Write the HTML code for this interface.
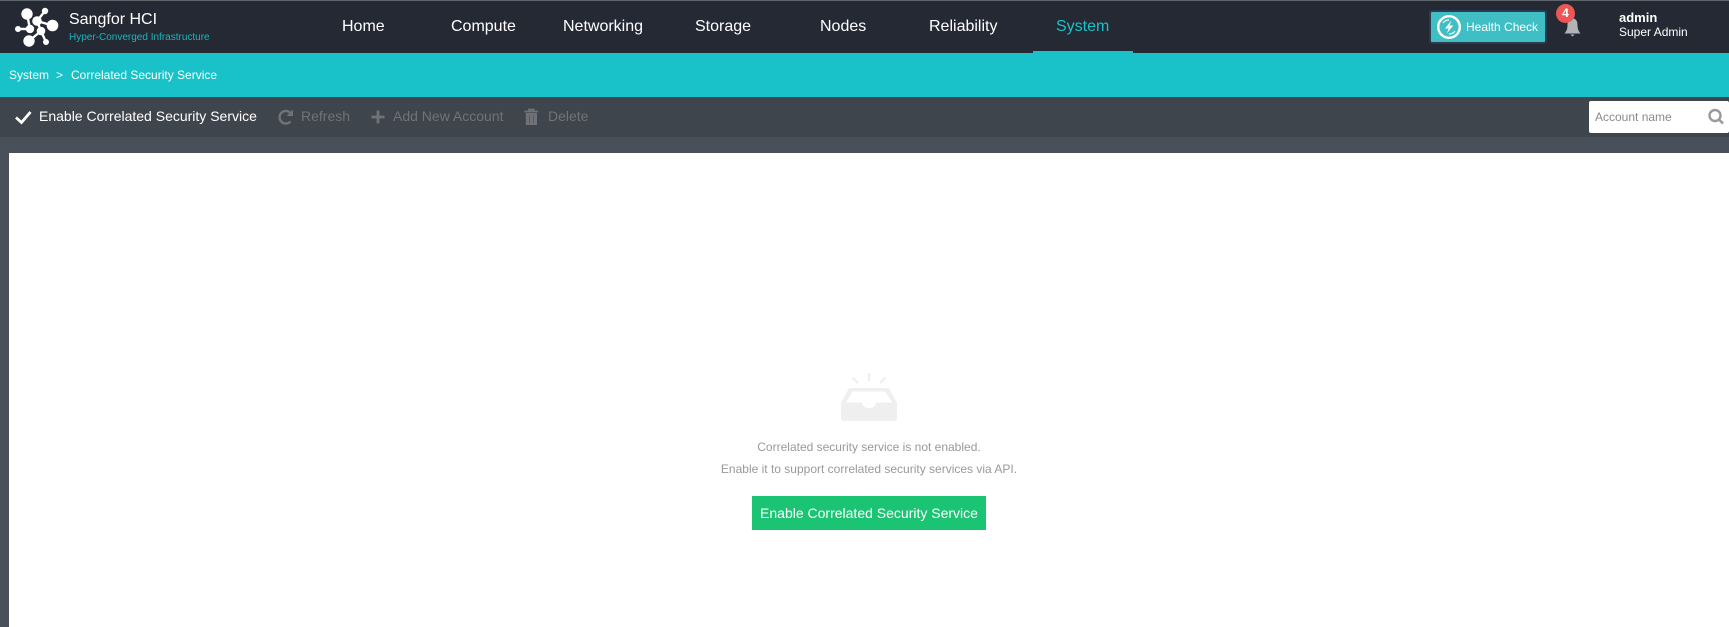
<!DOCTYPE html>
<html lang="en">
<head>
<meta charset="utf-8">
<title>Sangfor HCI</title>
<style>
html,body{margin:0;padding:0;width:1729px;height:627px;overflow:hidden;background:#fff;font-family:"Liberation Sans",Arial,sans-serif;}
.a{position:absolute;white-space:nowrap;}
.bar{position:absolute;left:0;width:1729px;}
.nav{position:absolute;top:16px;line-height:22px;font-size:16px;color:#fff;white-space:nowrap;}
.tool{position:absolute;top:106px;line-height:20px;font-size:14px;color:#6f7377;white-space:nowrap;}
svg{position:absolute;left:0;top:0;overflow:visible;}
</style>
</head>
<body>
<div class="bar" style="top:0;height:1px;background:#5e666c"></div>
<div class="bar" style="top:1px;height:52px;background:#252934"></div>
<div class="bar" style="top:53px;height:44px;background:#18c2c8"></div>
<div class="bar" style="top:97px;height:40px;background:#3f454d"></div>
<div class="bar" style="top:137px;height:16px;background:#4a505a"></div>
<div class="a" style="left:0;top:153px;width:9px;height:474px;background:#4a505a"></div>
<div class="a" style="left:1033px;top:51px;width:100px;height:2px;background:#18c2c8"></div>

<div class="a" style="left:69px;top:10px;font-size:16px;line-height:20px;color:#fff">Sangfor HCI</div>
<div class="a" style="left:69px;top:31px;font-size:10px;line-height:14px;color:#18b5bb">Hyper-Converged Infrastructure</div>

<div class="nav" style="left:342px">Home</div>
<div class="nav" style="left:451px">Compute</div>
<div class="nav" style="left:563px">Networking</div>
<div class="nav" style="left:695px">Storage</div>
<div class="nav" style="left:820px">Nodes</div>
<div class="nav" style="left:929px">Reliability</div>
<div class="nav" style="left:1056px;color:#18c2c8">System</div>

<div class="a" style="left:1429px;top:10px;width:114px;height:30px;border:2px solid #2a3d50;border-radius:3px;background:#3fbfc4"></div>
<div class="a" style="left:1466px;top:17px;font-size:12px;line-height:20px;color:#fff">Health Check</div>
<div class="a" style="left:1619px;top:10px;font-size:13px;font-weight:bold;line-height:16px;color:#fff">admin</div>
<div class="a" style="left:1619px;top:24px;font-size:12px;line-height:16px;color:#fff">Super Admin</div>

<div class="a" style="left:9px;top:66px;font-size:12px;line-height:18px;color:#fff">System</div>
<div class="a" style="left:56px;top:66px;font-size:12px;line-height:18px;color:#fff">&gt;</div>
<div class="a" style="left:71px;top:66px;font-size:12px;line-height:18px;color:#fff">Correlated Security Service</div>

<div class="tool" style="left:39px;color:#fff">Enable Correlated Security Service</div>
<div class="tool" style="left:301px">Refresh</div>
<div class="tool" style="left:393px">Add New Account</div>
<div class="tool" style="left:548px">Delete</div>

<div class="a" style="left:1589px;top:101px;width:140px;height:32px;background:#fff;border-radius:2px"></div>
<div class="a" style="left:1595px;top:107px;font-size:12px;line-height:20px;color:#8a8a8a">Account name</div>

<div class="a" style="left:9px;top:153px;width:1720px;height:474px;background:#fff"></div>
<div class="a" style="left:669px;top:438px;width:400px;text-align:center;font-size:12px;line-height:18px;color:#999">Correlated security service is not enabled.</div>
<div class="a" style="left:669px;top:460px;width:400px;text-align:center;font-size:12px;line-height:18px;color:#999">Enable it to support correlated security services via API.</div>
<div class="a" style="left:752px;top:496px;width:234px;height:34px;background:#1bc473;color:#fff;text-align:center;font-size:14px;line-height:34px">Enable Correlated Security Service</div>
<div class="a" style="left:1556px;top:4px;width:19px;height:19px;border-radius:50%;background:#ee5555;color:#fff;text-align:center;font-size:12px;font-weight:bold;line-height:18px;z-index:3">4</div>

<svg width="1729" height="627" viewBox="0 0 1729 627">
  <!-- logo -->
  <g stroke="#fff" stroke-width="2.400" fill="none">
    <path d="M27 14L30 29M45 11L37 21L52.500 25.500M18 29H30M41 31L29 41M41 31L46 42M37 21L41 31"/>
  </g>
  <g fill="#fff">
    <circle cx="27" cy="14" r="5.700"/><circle cx="45" cy="11" r="3.200"/><circle cx="37" cy="21" r="4.800"/>
    <circle cx="52.500" cy="25.500" r="5.800"/><circle cx="18" cy="29" r="3"/><circle cx="30" cy="29" r="4.200"/>
    <circle cx="41" cy="31" r="4.300"/><circle cx="29" cy="41" r="5.700"/><circle cx="46" cy="42" r="3"/>
  </g>
  <!-- health -->
  <circle cx="1449" cy="27" r="10.800" fill="none" stroke="#fff" stroke-width="2.400"/>
  <path d="M1443 23A7 7 0 0 1 1449 20M1455 31A7 7 0 0 1 1449 34" fill="none" stroke="#fff" stroke-width="1.200"/>
  <path d="M1451.500 20.500L1445 28.500H1448.700L1446.800 33.500L1453.300 25.500H1449.600Z" fill="#fff"/>
  <!-- bell -->
  <path d="M1572.500 18.500C1568.500 18.500 1567.500 22 1567.500 25C1567.500 29 1566.500 31 1564.500 33.500H1580.500C1578.500 31 1577.500 29 1577.500 25C1577.500 22 1576.500 18.500 1572.500 18.500Z" fill="#b0b4b8"/>
  <path d="M1570.300 34.500H1574.700L1572.500 36.500Z" fill="#b0b4b8"/>
  <!-- check -->
  <path d="M16 117.500L21.500 122.500L30.500 112" fill="none" stroke="#fff" stroke-width="2.800"/>
  <!-- refresh -->
  <path d="M290.500 121.500A6.300 6.300 0 1 1 290 112.500" fill="none" stroke="#6f7377" stroke-width="2.400"/>
  <path d="M293 109.500V116H286.500Z" fill="#6f7377"/>
  <!-- plus -->
  <path d="M378 110.500V123.500M371.500 117H384.500" stroke="#6f7377" stroke-width="2.800" fill="none"/>
  <!-- trash -->
  <path d="M524.500 111.500H538M529 111V109.500H533.500V111" stroke="#6f7377" stroke-width="1.800" fill="none"/>
  <path d="M525.800 113H537V125H525.800Z" fill="#6f7377"/>
  <path d="M529.500 115V123M533.500 115V123" stroke="#565a60" stroke-width="1"/>
  <!-- search -->
  <circle cx="1715" cy="115.500" r="5.500" fill="none" stroke="#9a9a9a" stroke-width="2.400"/>
  <path d="M1719 119.500L1723 123.500" stroke="#9a9a9a" stroke-width="2.600"/>
  <!-- empty tray -->
  <path d="M869 373V381M852.500 377.500L858 383M885.500 377.500L880 383" stroke="#efefef" stroke-width="2.200" fill="none"/>
  <path d="M851 388H887Q889 388 890 390L897 403V418Q897 421 894 421H844Q841 421 841 418V403L848 390Q849 388 851 388Z" fill="#efefef"/>
  <path d="M852.500 391.500H885.500L892 402.500H876C875.500 410 862.500 410 862 402.500H846Z" fill="#fff"/>
</svg>
</body>
</html>
